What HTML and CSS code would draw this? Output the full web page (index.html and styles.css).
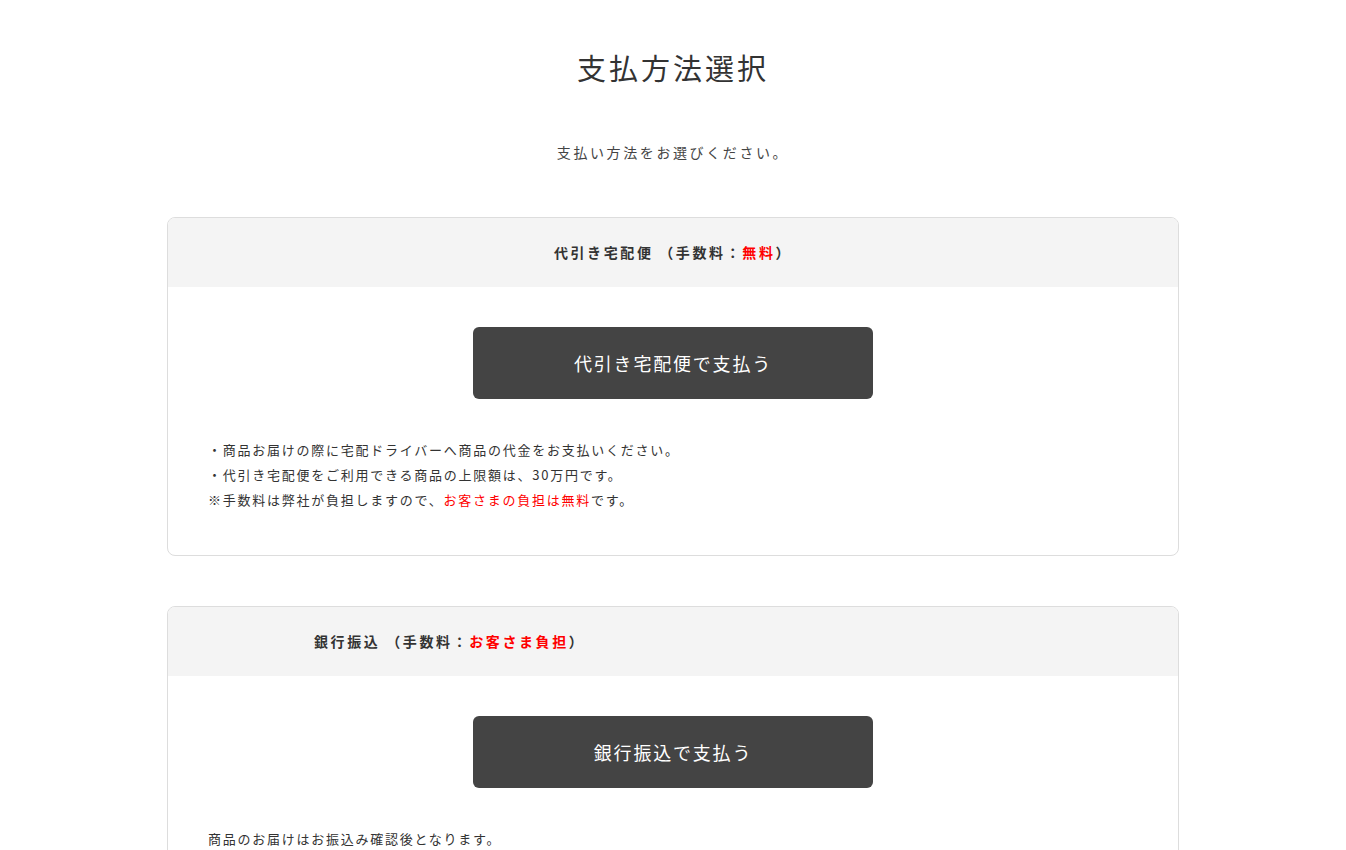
FILE: index.html
```html
<!DOCTYPE html>
<html lang="ja">
<head>
    <meta charset="UTF-8">
    <title>支払方法選択</title>
    <link rel="stylesheet" href="styles.css">
</head>
<body>
<main class="page">
    <h1 class="page-title">支払方法選択</h1>
    <p class="page-lead">支払い方法をお選びください。</p>

    <section class="pay-card">
        <h2 class="pay-head">代引き宅配便 （手数料：<span class="red">無料</span>）</h2>
        <div class="pay-body">
            <a class="pay-btn" href="#">代引き宅配便で支払う</a>
            <ul class="pay-notes">
                <li>・商品お届けの際に宅配ドライバーへ商品の代金をお支払いください。</li>
                <li>・代引き宅配便をご利用できる商品の上限額は、30万円です。</li>
                <li>※手数料は弊社が負担しますので、<span class="red">お客さまの負担は無料</span>です。</li>
            </ul>
        </div>
    </section>

    <section class="pay-card">
        <h2 class="pay-head pay-head-left">銀行振込 （手数料：<span class="red">お客さま負担</span>）</h2>
        <div class="pay-body">
            <a class="pay-btn" href="#">銀行振込で支払う</a>
            <ul class="pay-notes">
                <li>商品のお届けはお振込み確認後となります。</li>
            </ul>
        </div>
    </section>
</main>
</body>
</html>
```

FILE: styles.css
```css
html, body{
    margin: 0;
    padding: 0;
    background: #fff;
    color: #333;
    font-family: "Noto Sans CJK JP", "Noto Sans", sans-serif;
}

.page{
    width: 1012px;
    margin: 0 auto;
    padding-top: 44px;
}

.page-title{
    margin: 0;
    text-align: center;
    font-size: 29px;
    font-weight: normal;
    letter-spacing: 3px;
    line-height: 46px;
    color: #333;
}

.page-lead{
    margin: 51px 0 0;
    text-align: center;
    font-size: 14px;
    letter-spacing: 2.6px;
    line-height: 22px;
    color: #444;
}

.pay-card{
    margin-top: 54px;
    border: 1px solid #ddd;
    border-radius: 8px;
    overflow: hidden;
}

.pay-card + .pay-card{
    margin-top: 50px;
}

.pay-head{
    margin: 0;
    height: 69px;
    line-height: 69px;
    background: #f4f4f4;
    text-align: center;
    font-size: 14px;
    font-weight: bold;
    letter-spacing: 2.6px;
    color: #333;
}

.pay-head-left{
    text-align: left;
    padding-left: 146px;
}

.red{
    color: #f00;
}

.pay-body{
    padding: 40px 40px 43px;
}

.pay-btn{
    display: block;
    width: 400px;
    height: 72px;
    margin: 0 auto;
    background: #444;
    border-radius: 6px;
    color: #fff;
    text-decoration: none;
    text-align: center;
    line-height: 72px;
    font-size: 18px;
    letter-spacing: 1.8px;
}

.pay-notes{
    margin: 38px 0 0;
    padding: 0;
    list-style: none;
    font-size: 13px;
    line-height: 25px;
    letter-spacing: 1.75px;
    color: #333;
}
```
